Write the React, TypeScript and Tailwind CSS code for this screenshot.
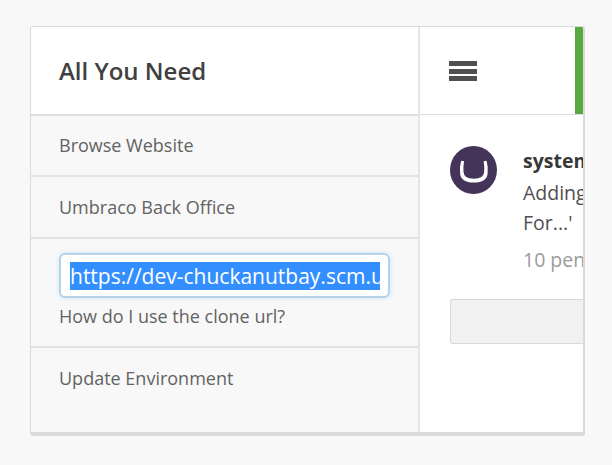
export default function App() {
  return (
    <div className="flex h-[465px] w-[612px] overflow-hidden bg-[#f8f8f8] pl-[30px] pt-[26px] font-['Open_Sans','Noto_Sans',sans-serif] text-[#636363]">
      <div className="flex h-[410px] w-[555px] overflow-hidden rounded-[3px] border border-b-4 border-r-2 border-[#dadada]">
        <aside className="flex w-[389px] shrink-0 flex-col border-r-2 border-[#e6e6e6]">
          <h1 className="flex h-[89px] shrink-0 items-center border-b-2 border-[#e0e0e0] bg-white pl-7 pt-px text-[24px] font-semibold text-[#404040]">
            <span className="whitespace-nowrap">All You Need</span>
          </h1>
          <a className="flex h-[61px] shrink-0 items-center whitespace-nowrap border-b-2 border-[#e2e2e2] pl-7 text-[18px]">Browse Website</a>
          <a className="flex h-[62px] shrink-0 items-center whitespace-nowrap border-b-2 border-[#e2e2e2] pl-7 text-[18px]">Umbraco Back Office</a>
          <div className="flex h-[109px] shrink-0 flex-col border-b-2 border-[#e2e2e2] pl-7 pt-[14px] text-[18px]">
            <div className="flex h-[45px] w-[331px] items-center rounded-[6px] border-2 border-[#b5d2e9] bg-white pl-[9px] shadow-[0_0_5px_#cce2f3]">
              <span className="h-[28px] w-[310px] overflow-hidden whitespace-nowrap bg-[#338fff] text-[21px] leading-[28px] text-white">https://dev-chuckanutbay.scm.umbraco.io</span>
            </div>
            <span className="mt-[6px] whitespace-nowrap leading-[24px]">How do I use the clone url?</span>
          </div>
          <a className="flex h-[61px] shrink-0 items-center whitespace-nowrap pl-7 text-[18px]">Update Environment</a>
        </aside>
        <main className="flex min-w-0 flex-1 flex-col overflow-hidden bg-white">
          <header className="flex h-[88px] shrink-0 items-center justify-between border-b border-[#dddddd] pl-[29px]">
            <div className="flex flex-col pt-px">
              <i className="mb-[3px] h-[5px] w-7 bg-[#505050]" />
              <i className="mb-[2px] h-[5px] w-7 bg-[#505050]" />
              <i className="h-[5px] w-7 bg-[#505050]" />
            </div>
            <div className="h-full w-2 bg-[#56aa41]" />
          </header>
          <section className="flex h-[184px] shrink-0 pl-[30px] pt-[31px]">
            <svg className="h-[48px] w-[47px] shrink-0" viewBox="0 0 47 48" preserveAspectRatio="none">
              <ellipse cx="23.5" cy="24" rx="23.5" ry="24" fill="#443459" />
              <path transform="translate(0.3 0)" d="M10.8 14.8L13.8 15.3Q12.8 21 13.2 26Q13.7 32.8 23.5 32.8Q33.3 32.8 33.9 26Q34.3 21 33.3 15.3L36.3 14.8Q38 21 37.3 27.5Q36.5 36.6 23.5 36.6Q10.6 36.6 9.8 27.5Q9.1 21 10.8 14.8Z" fill="white" />
            </svg>
            <div className="ml-[26px] whitespace-nowrap text-[19.5px] text-[#505050]">
              <div className="h-[31px] font-bold leading-[30px] text-[#383838]">system</div>
              <div className="h-[31px] leading-[31px]">Adding</div>
              <div className="h-[37px] leading-[30px]">For...'</div>
              <div className="leading-[30px] text-[#9b9b9b]">10 pending</div>
            </div>
          </section>
          <div className="ml-[30px] h-[45px] shrink-0 rounded-l-[3px] border border-r-0 border-[#d8d8d8] bg-[#f1f1f1]" />
        </main>
      </div>
    </div>
  );
}
